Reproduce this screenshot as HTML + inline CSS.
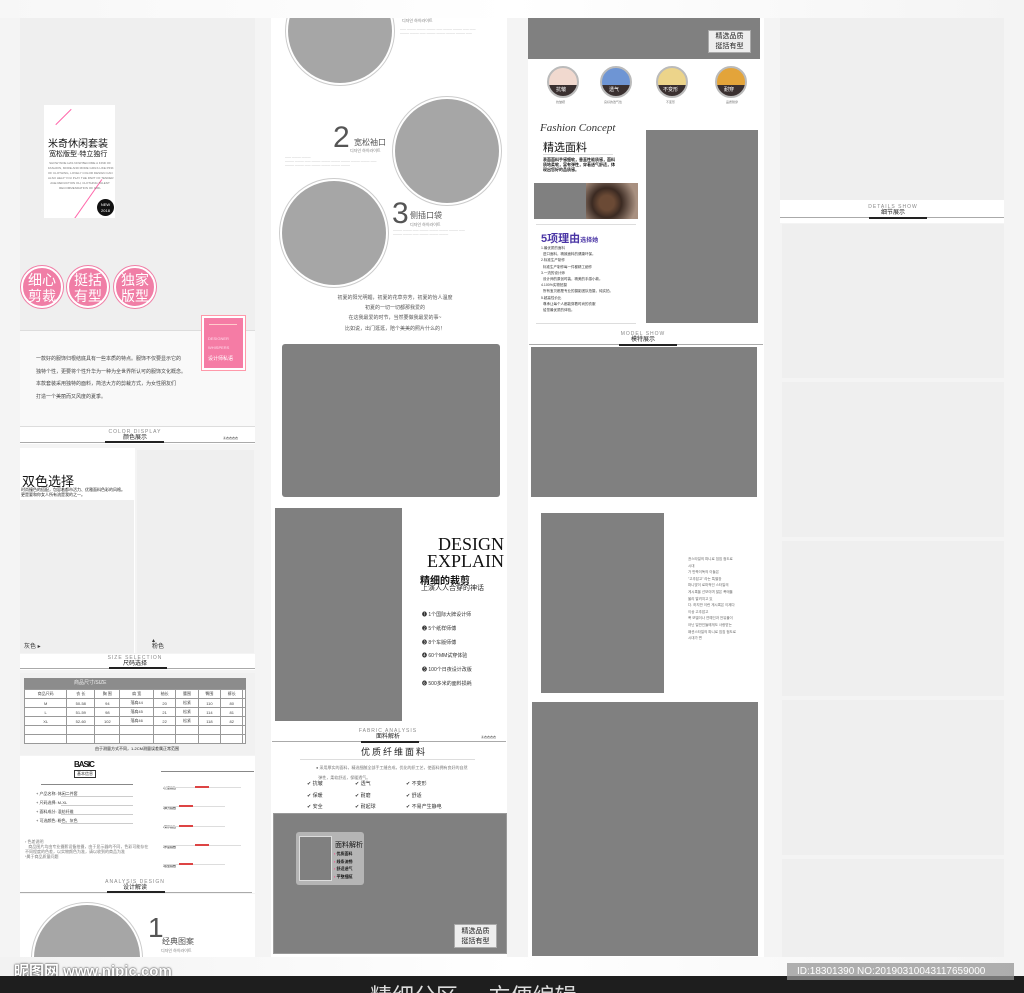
<!DOCTYPE html>
<html><head><meta charset="utf-8"><style>
*{margin:0;padding:0;box-sizing:border-box}
body{width:1024px;height:993px;background:#f4f4f4;position:relative;overflow:hidden;font-family:"Liberation Sans","Noto Sans CJK SC",sans-serif;color:#333}
.a{position:absolute}
.g{background:#808080}
.lg{background:#efefef}
.w{background:#fff}
.t{position:absolute;white-space:nowrap}
.hd{position:absolute;text-align:center;font-size:5px;line-height:6px;letter-spacing:1px;color:#888}
.hd b{display:block;font-size:6px;line-height:7px;color:#222;letter-spacing:0;font-weight:normal}
.ln{position:absolute;height:1px;background:#aaa}
.ul{position:absolute;height:2px;background:#222}
.tiny{position:absolute;font-size:4px;color:#777;line-height:6px;white-space:nowrap}
.circ{position:absolute;border-radius:50%;background:#a6a6a6;box-shadow:0 0 0 2px #fff,0 0 0 3px #ccc}
.pk{position:absolute;width:42px;height:42px;border-radius:50%;background:#f07ea6;border:2px solid #fff;box-shadow:0 0 0 1px #f07ea6;color:#fff;font-size:14px;line-height:16px;text-align:center;padding-top:4px}
table{border-collapse:collapse;font-size:4px;color:#444}
td{border:1px solid #999;height:9px;text-align:center}
</style></head><body>
<div class="a" style="left:0;top:0;width:1024px;height:18px;background:linear-gradient(90deg,#f7f7f7,#fff 50%,#f4f4f4)"></div>

<!-- COLUMN 1 -->
<div class="a lg" style="left:20px;top:18px;width:235px;height:312px"></div>
<div class="a w" style="left:44px;top:105px;width:71px;height:113px;overflow:hidden">
<div class="a" style="left:19px;top:1px;width:1px;height:22px;background:#f6a;transform:rotate(45deg)"></div>
<div class="a" style="left:43px;top:70px;width:1px;height:50px;background:#f6a;transform:rotate(35deg)"></div>
</div>
<div class="t" style="left:48px;top:135px;font-size:10px;color:#111">米奇休闲套装</div>
<div class="t" style="left:49px;top:149px;font-size:7px;color:#111">宽松版型·特立独行</div>
<div class="tiny" style="left:48px;top:161px;font-size:3px;line-height:5px;text-align:center;width:64px">SHOW WOE HAS NOW BECOME A KIND OF<br>FASHION, MORE AND MORE GIRLS LIKE PINK<br>OF CLOTHING, LOVELY COLOR DESIGN CAN<br>ALSO HELP YOU PLAY THE PART OF TENDER<br>AGE REDUCTION OH, CLOTHING TALENT<br>RECOMMENDATION OF GIRL</div>
<div class="a" style="left:97px;top:199px;width:17px;height:17px;border-radius:50%;background:#111;color:#fff;font-size:4px;text-align:center;line-height:6px;padding-top:3px">NEW<br>2018</div>
<div class="pk" style="left:21px;top:266px">细心<br>剪裁</div>
<div class="pk" style="left:67px;top:266px">挺括<br>有型</div>
<div class="pk" style="left:114px;top:266px">独家<br>版型</div>
<div class="a" style="left:20px;top:330px;width:235px;height:96px;background:#f9f9f9;border-top:1px solid #ddd"></div>
<div class="a" style="left:201px;top:315px;width:45px;height:56px;background:#f57ca5;border:1px solid #f9a;box-shadow:inset 0 0 0 2px #fff"></div>
<div class="a" style="left:209px;top:324px;width:28px;height:1px;background:#fcc"></div>
<div class="t" style="left:208px;top:334px;font-size:4px;color:#fde;line-height:9px">DESIGNER<br>WHISPERS</div>
<div class="t" style="left:208px;top:355px;font-size:5px;color:#fff">设计师私语</div>
<div class="tiny" style="left:36px;top:353px;font-size:5px;line-height:12.6px;color:#444">一款好的服饰归根结底具有一些本质的特点。服饰不仅要显示它的<br>独特个性，更要将个性升华为一种为全世界所认可的服饰文化概念。<br>本款套装采用独特的面料，简洁大方的剪裁方式，为女性朋友们<br>打造一个美丽而又风度的夏季。</div>
<div class="a w" style="left:20px;top:426px;width:235px;height:18px;border-top:1px solid #ddd"></div>
<div class="hd" style="left:80px;top:429px;width:110px">COLOR DISPLAY<b>颜色展示</b></div>
<div class="ln" style="left:20px;top:442px;width:235px"></div><div class="ul" style="left:105px;top:441px;width:59px"></div>
<div class="t" style="left:223px;top:436px;font-size:3px;color:#333">Ⓐ衣衣衣衣</div>
<div class="a w" style="left:20px;top:448px;width:115px;height:205px"></div>
<div class="a lg" style="left:20px;top:500px;width:114px;height:153px"></div>
<div class="a lg" style="left:137px;top:450px;width:117px;height:203px"></div>
<div class="t" style="left:22px;top:471px;font-size:13px;color:#111">双色选择</div>
<div class="tiny" style="left:21px;top:487px;font-size:4px;color:#222;line-height:5px">时尚撞色的搭配，包容着都市活力、优雅面料色彩的风格。<br>更是要和你女人所有流是我的之一。</div>
<div class="t" style="left:24px;top:641px;font-size:6px">灰色 ▸</div>
<div class="t" style="left:152px;top:638px;font-size:6px;line-height:6px">▴<br>粉色</div>
<div class="a w" style="left:20px;top:654px;width:235px;height:16px"></div>
<div class="hd" style="left:80px;top:655px;width:110px">SIZE SELECTION<b>尺码选择</b></div>
<div class="ln" style="left:20px;top:668px;width:235px"></div><div class="ul" style="left:109px;top:667px;width:58px"></div>
<div class="a" style="left:20px;top:673px;width:235px;height:82px;background:#f1f1f1"></div>
<div class="a" style="left:24px;top:678px;width:222px;height:11px;background:#8c8c8c;color:#eee;font-size:5px;padding-left:50px;line-height:11px">商品尺寸/SIZE</div>
<table class="a" style="left:24px;top:689px;width:222px;background:#fff">
<tr><td>商品尺码</td><td>衣 长</td><td>胸 围</td><td>肩 宽</td><td>袖长</td><td>腰围</td><td>臀围</td><td>裤长</td><td></td></tr>
<tr><td>M</td><td>50-58</td><td>94</td><td>落肩44</td><td>20</td><td>松紧</td><td>110</td><td>80</td><td></td></tr>
<tr><td>L</td><td>51-59</td><td>98</td><td>落肩45</td><td>21</td><td>松紧</td><td>114</td><td>81</td><td></td></tr>
<tr><td>XL</td><td>52-60</td><td>102</td><td>落肩46</td><td>22</td><td>松紧</td><td>118</td><td>82</td><td></td></tr>
<tr><td></td><td></td><td></td><td></td><td></td><td></td><td></td><td></td><td></td></tr>
<tr><td></td><td></td><td></td><td></td><td></td><td></td><td></td><td></td><td></td></tr>
</table>
<div class="t" style="left:95px;top:746px;font-size:4px;color:#222">由于测量方式不同，1-2CM测量误差属正常范围</div>
<div class="a w" style="left:20px;top:756px;width:235px;height:137px"></div>
<div class="t" style="left:74px;top:760px;font-size:8px;font-weight:bold;color:#111;letter-spacing:-1px">BASIC</div>
<div class="t" style="left:74px;top:770px;font-size:4px;border:1px solid #333;padding:0 2px">基本信息</div>
<div class="ln" style="left:41px;top:784px;width:92px;background:#888"></div>
<div class="tiny" style="left:36px;top:789px;font-size:4px;line-height:9px;color:#333">+ 产品名称: 休闲二件套<br>+ 尺码选择: M-XL<br>+ 面料成分: 混纺纤维<br>+ 可选颜色: 粉色、灰色</div>
<div class="ln" style="left:61px;top:796px;width:72px;background:#ccc"></div><div class="ln" style="left:61px;top:805px;width:72px;background:#ccc"></div><div class="ln" style="left:61px;top:814px;width:72px;background:#ccc"></div><div class="ln" style="left:61px;top:823px;width:72px;background:#ccc"></div>
<div class="tiny" style="left:25px;top:839px;font-size:4px;line-height:5px">› 色差说明<br>&nbsp;&nbsp;&nbsp;商品图片均由专业摄影设备拍摄，由于显示器的不同，色彩可能存在<br>不同程度的色差，以实物颜色为准，请以收到的商品为准<br>*属于商品质量问题</div>
<div class="ln" style="left:161px;top:771px;width:93px;background:#888"></div>
<div class="tiny" style="left:163px;top:779px;font-size:3px;line-height:19.5px;color:#222">•长度指数<br>•弹力指数<br>•薄厚指数<br>•厚度指数<br>•版型指数</div>
<div class="a" style="left:163px;top:787px;width:78px;height:1px;background:#ddd"></div><div class="a" style="left:195px;top:786px;width:14px;height:2px;background:#d44"></div>
<div class="a" style="left:163px;top:806px;width:62px;height:1px;background:#ddd"></div><div class="a" style="left:179px;top:805px;width:14px;height:2px;background:#d44"></div>
<div class="a" style="left:163px;top:826px;width:62px;height:1px;background:#ddd"></div><div class="a" style="left:179px;top:825px;width:14px;height:2px;background:#d44"></div>
<div class="a" style="left:163px;top:845px;width:78px;height:1px;background:#ddd"></div><div class="a" style="left:195px;top:844px;width:14px;height:2px;background:#d44"></div>
<div class="a" style="left:163px;top:864px;width:62px;height:1px;background:#ddd"></div><div class="a" style="left:179px;top:863px;width:14px;height:2px;background:#d44"></div>
<div class="hd" style="left:80px;top:879px;width:110px">ANALYSIS DESIGN<b>设计解读</b></div>
<div class="ln" style="left:20px;top:892px;width:232px"></div><div class="ul" style="left:107px;top:891px;width:58px"></div>
<div class="a w" style="left:20px;top:894px;width:235px;height:63px;overflow:hidden"><div class="circ" style="left:14px;top:11px;width:106px;height:106px"></div></div>
<div class="t" style="left:148px;top:913px;font-size:28px;color:#555;line-height:30px">1</div>
<div class="t" style="left:162px;top:936px;font-size:8px;color:#555">经典图案</div>
<div class="tiny" style="left:161px;top:948px">디자인 하이라이트</div>

<!-- COLUMN 2 -->
<div class="a w" style="left:271px;top:18px;width:236px;height:939px;overflow:hidden">
<div class="circ" style="left:17px;top:-39px;width:104px;height:104px"></div>
<div class="circ" style="left:124px;top:81px;width:104px;height:104px"></div>
<div class="circ" style="left:11px;top:163px;width:104px;height:104px"></div>
</div>
<div class="tiny" style="left:402px;top:18px">디자인 하이라이트</div>
<div class="tiny" style="left:400px;top:27px;font-size:3px;line-height:4px;color:#999">—— ——— ——— ——— —— ——— ——— —— ——<br>——— ——— —— ——— ——— ——— ——— ——</div>
<div class="t" style="left:333px;top:121px;font-size:30px;color:#555;line-height:34px">2</div>
<div class="t" style="left:354px;top:137px;font-size:8px;color:#555">宽松袖口</div>
<div class="tiny" style="left:350px;top:148px">디자인 하이라이트</div>
<div class="tiny" style="left:285px;top:155px;font-size:3px;line-height:4px;color:#999">—— ——— ———<br>——— ——— —— ——— ——— ——— ——— ——— ——— ——<br>——— ——— —— ——— ——— ——— ———</div>
<div class="t" style="left:392px;top:197px;font-size:30px;color:#555;line-height:34px">3</div>
<div class="t" style="left:410px;top:210px;font-size:8px;color:#555">侧插口袋</div>
<div class="tiny" style="left:410px;top:222px">디자인 하이라이트</div>
<div class="tiny" style="left:393px;top:228px;font-size:3px;line-height:4px;color:#999">——— ——— —— ——— ——— ——— ——— ——<br>——— ——— —— ——— ——— ———</div>
<div class="tiny" style="left:300px;top:293px;width:190px;text-align:center;font-size:5px;line-height:10.2px;color:#555">初夏的阳光明媚，初夏的花草芬芳，初夏的怡人温度<br>初夏的一切一切都那我爱的<br>在这我最爱的时节，当然要做我最爱的事~<br>比如说，出门逛逛，陪个美美的照片什么的！</div>
<div class="a g" style="left:282px;top:344px;width:218px;height:153px;border-radius:3px"></div>
<div class="a g" style="left:275px;top:508px;width:127px;height:213px"></div>
<div class="t" style="left:420px;top:536px;font-family:'Liberation Serif',serif;font-size:18px;line-height:17px;color:#111;text-align:right;width:84px">DESIGN<br>EXPLAIN</div>
<div class="t" style="left:420px;top:572px;font-size:10px;font-weight:bold;color:#111">精细的裁剪</div>
<div class="t" style="left:421px;top:583px;font-size:7px;color:#333">上演人人合穿的神话</div>
<div class="tiny" style="left:422px;top:609px;font-size:5px;line-height:13.8px;color:#333">❶ 1个国际大牌设计师<br>❷ 5个纸样师傅<br>❸ 8个车版师傅<br>❹ 60个MM试穿体验<br>❺ 100个日夜设计改版<br>❻ 500多米的面料损耗</div>
<div class="hd" style="left:333px;top:728px;width:110px">FABRIC ANALYSIS<b>面料解析</b></div>
<div class="ln" style="left:272px;top:741px;width:234px"></div><div class="ul" style="left:361px;top:741px;width:58px"></div>
<div class="t" style="left:481px;top:735px;font-size:3px;color:#333">Ⓐ衣衣衣衣</div>
<div class="t" style="left:361px;top:745px;font-size:9px;letter-spacing:2px;color:#222">优质纤维面料</div>
<div class="ln" style="left:300px;top:759px;width:175px;background:#ddd"></div>
<div class="tiny" style="left:316px;top:763px;font-size:4px;line-height:10px">● 采用厚实的面料，精选细腻全部手工缝合成，优化的织工艺，使面料拥有良好的自然<br>&nbsp;&nbsp;弹性，柔软舒适，保暖透气。</div>
<div class="tiny" style="left:307px;top:779px;font-size:5px;line-height:11.6px;color:#333">✔ 抗皱<br>✔ 保暖<br>✔ 安全</div>
<div class="tiny" style="left:355px;top:779px;font-size:5px;line-height:11.6px;color:#333">✔ 透气<br>✔ 耐磨<br>✔ 耐起球</div>
<div class="tiny" style="left:406px;top:779px;font-size:5px;line-height:11.6px;color:#333">✔ 不变形<br>✔ 舒适<br>✔ 不易产生静电</div>
<div class="a g" style="left:273px;top:813px;width:234px;height:141px;border:1px solid #999"></div>
<div class="a" style="left:296px;top:832px;width:68px;height:53px;background:#b5b5b5;border-radius:3px"></div>
<div class="a g" style="left:299px;top:836px;width:33px;height:45px;border:1px solid #ddd"></div>
<div class="t" style="left:335px;top:840px;font-size:7px;color:#111">面料解析</div>
<div class="tiny" style="left:334px;top:850px;font-size:4px;line-height:7.5px;color:#111;font-weight:bold"><span style="color:#f48">▪</span> 优质面料<br><span style="color:#f48">▪</span> 线条流畅<br><span style="color:#f48">▪</span> 舒适透气<br><span style="color:#f48">▪</span> 平整细腻</div>
<div class="a" style="left:454px;top:924px;width:43px;height:24px;background:#eee;border:1px solid #aaa;font-size:7px;line-height:10px;color:#222;text-align:center;padding-top:2px">精选品质<br>挺括有型</div>

<!-- COLUMN 3 -->
<div class="a w" style="left:528px;top:18px;width:236px;height:939px"></div>
<div class="a g" style="left:528px;top:18px;width:232px;height:41px"></div>
<div class="a" style="left:708px;top:30px;width:43px;height:23px;background:#eee;border:1px solid #aaa;font-size:7px;line-height:10px;color:#222;text-align:center;padding-top:1px">精选品质<br>挺括有型</div>
<div class="a" style="left:547px;top:66px;width:32px;height:32px;border-radius:50%;background:linear-gradient(#f1d9cf 60%,#3a3030 60%);border:2px solid #bbb"></div>
<div class="a" style="left:600px;top:66px;width:32px;height:32px;border-radius:50%;background:linear-gradient(#6e95d4 60%,#3a3030 60%);border:2px solid #bbb"></div>
<div class="a" style="left:656px;top:66px;width:32px;height:32px;border-radius:50%;background:linear-gradient(#ecd48a 60%,#3a3030 60%);border:2px solid #bbb"></div>
<div class="a" style="left:715px;top:66px;width:32px;height:32px;border-radius:50%;background:linear-gradient(#e3a43a 60%,#3a3030 60%);border:2px solid #bbb"></div>
<div class="t" style="left:556px;top:86px;font-size:5px;color:#fff">抗皱</div>
<div class="t" style="left:609px;top:86px;font-size:5px;color:#fff">透气</div>
<div class="t" style="left:663px;top:86px;font-size:5px;color:#fff">不变形</div>
<div class="t" style="left:724px;top:86px;font-size:5px;color:#fff">耐穿</div>
<div class="tiny" style="left:556px;top:99px;font-size:3px">抗皱褶</div>
<div class="tiny" style="left:604px;top:99px;font-size:3px">良好的透气性</div>
<div class="tiny" style="left:666px;top:99px;font-size:3px">不变形</div>
<div class="tiny" style="left:726px;top:99px;font-size:3px">品质耐穿</div>
<div class="t" style="left:540px;top:122px;font-family:'Liberation Serif',serif;font-style:italic;font-size:11px;color:#333">Fashion Concept</div>
<div class="t" style="left:543px;top:139px;font-size:11px;color:#111">精选面料</div>
<div class="ln" style="left:543px;top:154px;width:70px;background:#ddd"></div>
<div class="tiny" style="left:543px;top:157px;font-size:4px;line-height:5px;color:#111;font-weight:bold">表面面料手感细软，垂直性能质感，面料<br>质地柔软，富有弹性，穿着透气舒适，体<br>现出您好的品质感。</div>
<div class="a g" style="left:534px;top:183px;width:52px;height:36px"></div>
<div class="a" style="left:586px;top:183px;width:52px;height:36px;background:radial-gradient(circle at 40% 55%,#6b4a35 20%,#3b2a22 40%,#a89080 80%)"></div>
<div class="ln" style="left:536px;top:224px;width:100px;background:#ddd"></div>
<div class="t" style="left:541px;top:230px;font-size:11px;font-weight:bold;color:#4a35a5">5项理由<span style="font-size:6px">选择她</span></div>
<div class="tiny" style="left:541px;top:245px;font-size:3.5px;line-height:6.2px;color:#333">1.最优质的面料<br>&nbsp;&nbsp;进口面料，精致面料的健康环保。<br>2.标准生产制作<br>&nbsp;&nbsp;标准生产制作每一件都精工细作<br>3.一流的设计师<br>&nbsp;&nbsp;设计师的原创时装，精美的手感小款。<br>4.100%实物拍摄<br>&nbsp;&nbsp;所有宝贝都是专业的摄影团队拍摄，纯实拍。<br>5.超高性价比<br>&nbsp;&nbsp;尊承让每个人都能穿着时尚的衣服<br>&nbsp;&nbsp;给您最优质的体验。</div>
<div class="ln" style="left:536px;top:323px;width:100px;background:#ddd"></div>
<div class="a g" style="left:646px;top:130px;width:112px;height:193px"></div>
<div class="hd" style="left:588px;top:331px;width:110px">MODEL SHOW<b>模特展示</b></div>
<div class="ln" style="left:529px;top:344px;width:234px"></div><div class="ul" style="left:619px;top:344px;width:58px"></div>
<div class="a g" style="left:531px;top:347px;width:226px;height:150px"></div>
<div class="a g" style="left:541px;top:513px;width:123px;height:180px"></div>
<div class="tiny" style="left:688px;top:556px;font-size:3.5px;line-height:6.6px;color:#666">권스타일의 파니로 짐짐 점도로<br>시대<br>가 반짝이독의 이들은<br>"고추잡고" 라는 특별장<br>파니맞이 로마적인 스타일의<br>게시록을 선보이며 많은 폭매율<br>올리 알려지고 있<br>다. 하지만 이런 게시록은 이제다<br>이상 고추잡고<br>폭 모델이나 연예인과 전유물이<br>아닌 일반인들에게도 사랑받는<br>패션스타일의 파니로 짐짐 점도로<br>시대가 변</div>
<div class="a g" style="left:532px;top:702px;width:226px;height:254px"></div>

<!-- COLUMN 4 -->
<div class="a lg" style="left:780px;top:18px;width:224px;height:182px"></div>
<div class="a w" style="left:780px;top:200px;width:224px;height:23px"></div>
<div class="hd" style="left:838px;top:204px;width:110px">DETAILS SHOW<b>细节展示</b></div>
<div class="ln" style="left:780px;top:217px;width:224px"></div><div class="ul" style="left:869px;top:217px;width:58px"></div>
<div class="a lg" style="left:782px;top:224px;width:222px;height:154px"></div>
<div class="a lg" style="left:782px;top:382px;width:222px;height:155px"></div>
<div class="a lg" style="left:782px;top:541px;width:222px;height:155px"></div>
<div class="a lg" style="left:782px;top:700px;width:222px;height:155px"></div>
<div class="a lg" style="left:782px;top:859px;width:222px;height:98px"></div>

<!-- footer -->
<div class="a" style="left:0;top:957px;width:1024px;height:19px;background:linear-gradient(90deg,#f2f2f2,#fff 50%,#f4f4f4)"></div>
<div class="t" style="left:14px;top:960px;font-size:15px;font-weight:bold;color:#fff;text-shadow:0 0 2px #444,0 0 1px #444">昵图网 www.nipic.com</div>
<div class="a" style="left:0;top:976px;width:1024px;height:17px;background:#1e1e1e;overflow:hidden"><div class="t" style="left:370px;top:3px;font-size:22px;color:#ddd">精细分区 ... 方便编辑</div></div>
<div class="a" style="left:787px;top:963px;width:227px;height:17px;background:rgba(150,150,150,.75);color:#fff;font-size:10px;line-height:17px;padding-left:10px">ID:18301390 NO:20190310043117659000</div>
</body></html>
